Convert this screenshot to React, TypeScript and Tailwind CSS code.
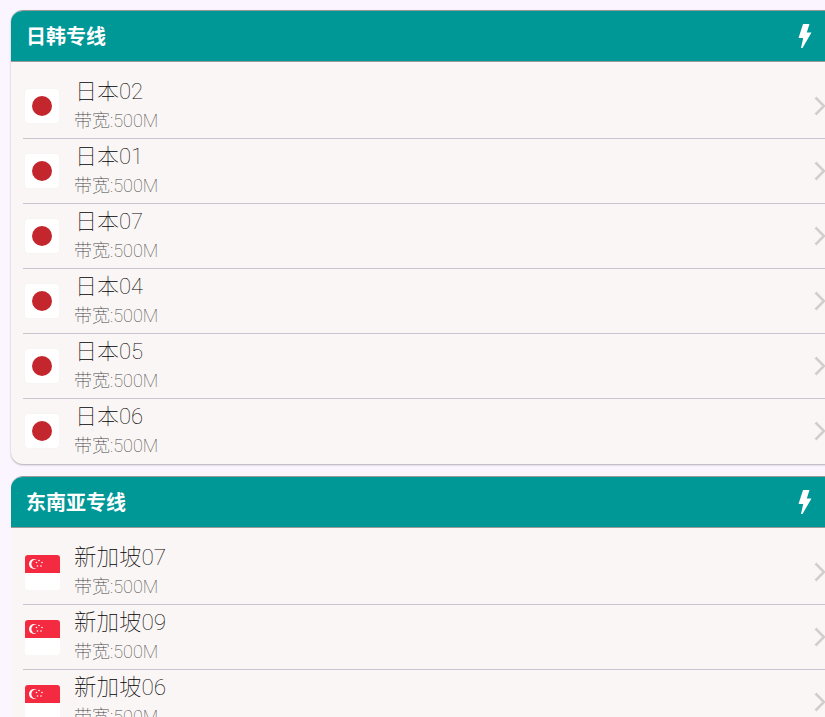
const font = "font-['Roboto','Noto_Sans_CJK_SC',sans-serif]"

function Bolt() {
  return (
    <svg width="14" height="24" viewBox="0 0 14 24" className="block">
      <path d="M5 0 L11.5 0 L8.8 8.5 L13.5 8.5 L4.5 24 L3 24 L5.2 14 L0.5 14 Z" fill="#fff" />
    </svg>
  )
}

function Chevron() {
  return (
    <svg width="12" height="20" viewBox="0 0 12 20" className="block shrink-0" fill="none">
      <path d="M1.5 1.5 L10 10 L1.5 18.5" stroke="#d0cfce" strokeWidth="2.6" />
    </svg>
  )
}

function JapanFlag() {
  return (
    <div className="flex h-[34px] w-[34px] shrink-0 items-center justify-center rounded-[3px] bg-white shadow-[0_0_1px_rgba(0,0,0,0.08)]">
      <div className="h-5 w-5 rounded-full bg-[#c4262e]" />
    </div>
  )
}

function SingaporeFlag() {
  return (
    <div className="flex h-[35px] w-[35px] shrink-0 flex-col overflow-hidden rounded-[3px] bg-white">
      <svg width="35" height="18" viewBox="0 0 35 18" className="block">
        <rect width="35" height="18" fill="#f42a41" />
        <circle cx="9" cy="9" r="5" fill="#fff" />
        <circle cx="11" cy="9" r="4.6" fill="#f42a41" />
        <circle cx="14" cy="5.5" r="0.8" fill="#fff" />
        <circle cx="17" cy="7.5" r="0.8" fill="#fff" />
        <circle cx="16" cy="11" r="0.8" fill="#fff" />
        <circle cx="12.5" cy="11" r="0.8" fill="#fff" />
        <circle cx="11.5" cy="7.5" r="0.8" fill="#fff" />
      </svg>
    </div>
  )
}

function Row({ name, flag, last }: { name: string; flag: "jp" | "sg"; last?: boolean }) {
  return (
    <div className={`ml-3 flex h-[65px] items-center border-b ${last ? "border-transparent" : "border-[#c9c4d0]"}`}>
      <div className="ml-[2px] flex w-[49px] shrink-0">{flag === "jp" ? <JapanFlag /> : <SingaporeFlag />}</div>
      <div className="flex min-w-0 flex-1 flex-col">
        <span className={`font-thin text-black ${flag === "jp" ? "pl-px text-[22px] leading-[30px]" : "mb-[2px] text-[22.5px] leading-[28px]"}`}>{name}</span>
        <span className="text-[18px] leading-[28px] font-thin text-[#444444]">带宽:500M</span>
      </div>
      <div className="mr-[17px]">
        <Chevron />
      </div>
    </div>
  )
}

function Section({ title, flag, names, cut }: { title: string; flag: "jp" | "sg"; names: string[]; cut?: boolean }) {
  return (
    <div className={`w-[832px] shrink-0 overflow-hidden rounded-t-xl bg-[#faf6f5] ${cut ? "" : "rounded-b-xl shadow-[0_1px_2px_rgba(0,0,0,0.3)]"} border-t border-[#9a9a9a]`}>
      <div className="flex h-[51px] items-center justify-between border-b border-[#9a9a9a] bg-[#009797] pr-[31px] pl-[15px]">
        <span className="pt-[2px] text-[20px] font-bold text-white">{title}</span>
        <Bolt />
      </div>
      <div className="pt-[12px]">
        {names.map((n, i) => (
          <Row key={n} name={n} flag={flag} last={!cut && i === names.length - 1} />
        ))}
      </div>
    </div>
  )
}

export default function App() {
  return (
    <div className={`flex h-[717px] w-[825px] flex-col gap-3 overflow-hidden bg-[#fbf5ff] pt-[10px] pl-[11px] ${font}`}>
      <Section title="日韩专线" flag="jp" names={["日本02", "日本01", "日本07", "日本04", "日本05", "日本06"]} />
      <Section title="东南亚专线" flag="sg" names={["新加坡07", "新加坡09", "新加坡06"]} cut />
    </div>
  )
}
